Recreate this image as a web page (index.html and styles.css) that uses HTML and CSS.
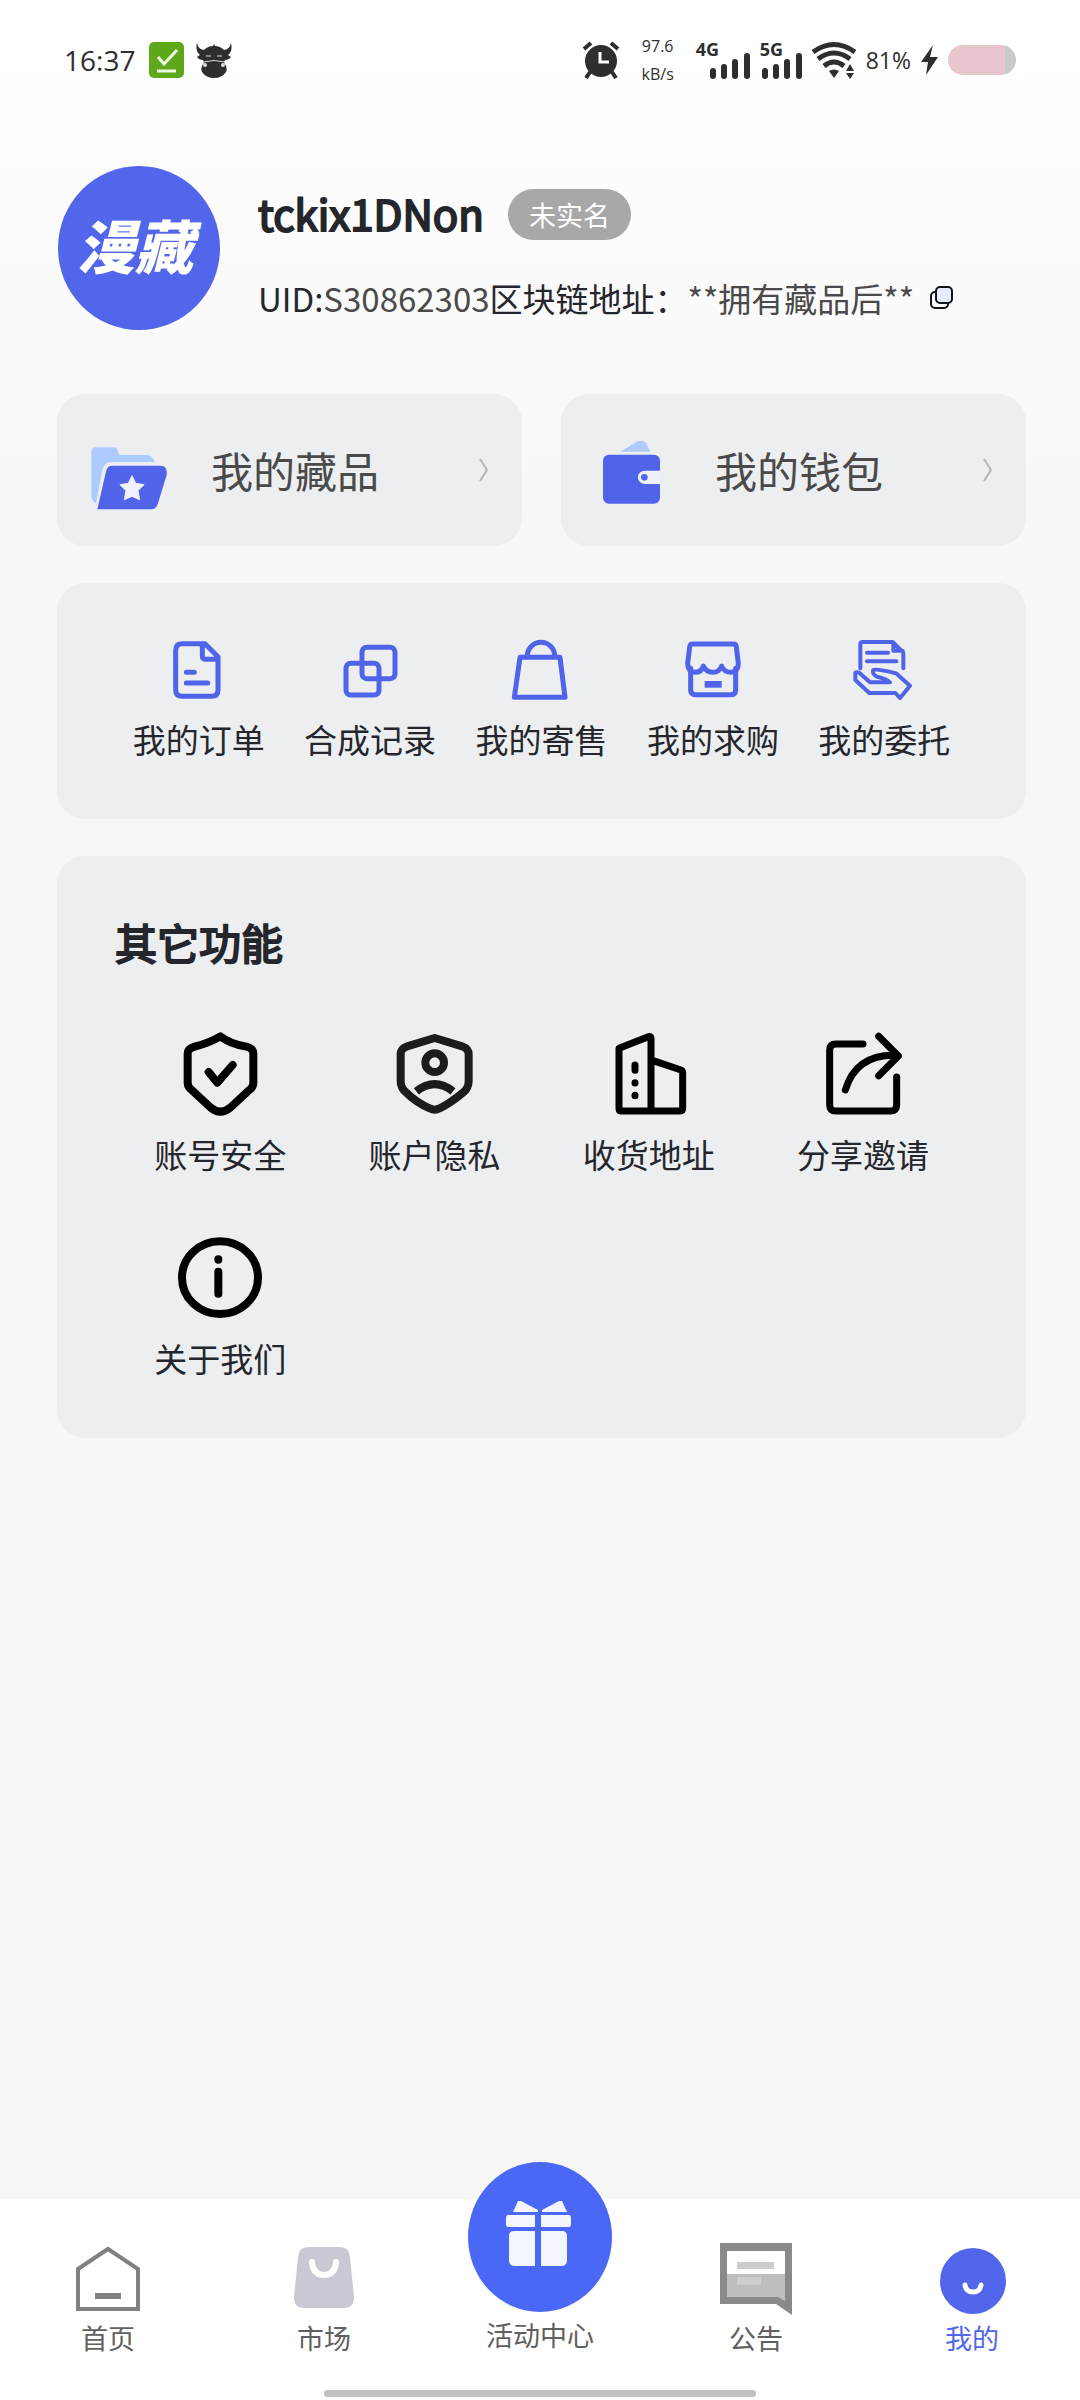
FILE: index.html
```html
<!DOCTYPE html>
<html lang="zh-CN">
<head>
<meta charset="utf-8">
<meta name="viewport" content="width=device-width, initial-scale=1">
<title>我的</title>
<link rel="stylesheet" href="styles.css">
</head>
<body>
<div class="status">
  <div class="status-left">
    <span class="clock">16:37</span>
    <svg width="35" height="36" viewBox="0 0 35 36"><rect width="35" height="36" rx="5" fill="#5fa81c"/><path d="M9 15l6 7 13-14M8 29h19" fill="none" stroke="#eefbe2" stroke-width="3"/></svg>
    <svg width="36" height="36" viewBox="0 0 36 36" fill="#2e2e2e"><path d="M1 1q1 6 7 7 4-4 9-4l1-2 1 2q5 0 9 4 6-1 7-7 2 8-3 12l3 2q-2 3-6 3l-1 3H8l-1-3q-4 0-6-3l3-2Q-1 9 1 1z"/><path d="M8 21q10-3 20 0 4 4 2 9-4 6-12 6T6 30q-2-5 2-9z"/><path d="M7 20q11-3 22 0M10 14h5M21 14h5" stroke="#ddd" stroke-width="1" fill="none"/><circle cx="9" cy="23" r="2" fill="#ddd"/><circle cx="27" cy="23" r="2" fill="#ddd"/></svg>
  </div>
  <div class="status-right">
    <svg width="38" height="38" viewBox="0 0 38 38"><circle cx="19" cy="20" r="16" fill="#2e2e2e"/><path d="M2 8l7-6M36 8l-7-6M8 31l-4 6M30 31l4 6" stroke="#2e2e2e" stroke-width="4" fill="none"/><path d="M18 11v10h9" fill="none" stroke="#fff" stroke-width="3"/></svg>
    <span class="speed"><span>97.6</span><span>kB/s</span></span>
    <span class="signal signal-wide"><span class="net">4G</span><svg width="40" height="26" viewBox="0 0 40 26"><path d="M3 18v5M14 14v9M25 9v14M37 3v20" stroke="#2e2e2e" stroke-width="6" stroke-linecap="round"/></svg></span>
    <span class="signal"><span class="net">5G</span><svg width="40" height="26" viewBox="0 0 40 26"><path d="M3 18v5M14 14v9M25 9v14M37 3v20" stroke="#2e2e2e" stroke-width="6" stroke-linecap="round"/></svg></span>
    <svg width="44" height="38" viewBox="0 0 44 38" fill="none" stroke="#2e2e2e" stroke-width="5"><path d="M1 11q21-15 42 0M6 18q16-12 32 0M12 25q10-8 20 0"/><path d="M17 30q5-3 10 0l-5 7zM34 30l4-7 4 7zM34 32h8l-4 6z" fill="#2e2e2e" stroke="none"/></svg>
    <span class="percent">81%</span>
    <svg width="17" height="30" viewBox="0 0 17 30"><path d="M12 0L0 17h7L5 30 17 12H9z" fill="#2e2e2e"/></svg>
    <span class="battery"></span>
  </div>
</div>

<main class="content">
  <header class="profile">
    <svg class="avatar" viewBox="0 0 163 165" role="img" aria-label="漫藏"><ellipse cx="82" cy="82" rx="81" ry="82" fill="#5266ec"/><text class="logo" x="78" y="103" text-anchor="middle">漫藏</text></svg>
    <div class="who">
      <div class="name-row"><h1 class="name">tckix1DNon</h1><span class="badge">未实名</span></div>
      <div class="uid-row">
        <span>UID:<span class="soft">S30862303</span>区块链地址：<span class="soft">**拥有藏品后**</span></span>
        <button class="copy" type="button" aria-label="复制"><svg width="24" height="24" viewBox="0 0 24 24" stroke="#14151c" stroke-width="2"><rect x="1" y="6" width="17" height="16" rx="4" fill="none"/><rect x="6" y="1" width="16" height="16" rx="4" fill="#e8ebff"/></svg></button>
      </div>
    </div>
  </header>

  <div class="cards">
    <a class="card" href="#">
      <svg class="icon-lg" viewBox="135 144 252 252"><path d="M154 215Q154 202 168 202H222Q230 202 234 212 236 224 242 225H320Q338 226 344 246H215Q193 246 187 270L168 370Q154 362 154 345z" fill="#aecbff"/><path d="M199 270Q203 257 218 257H362Q383 257 380 285L354 370Q348 388 335 388H172z" fill="#5064e9"/><path d="M276 287l11 23 25 4-18 18 5 27-23-10-23 10 5-27-18-18 25-4z" fill="#f0f2ff" stroke="#f0f2ff" stroke-width="3" stroke-linejoin="round"/></svg>
      <span class="card-text">我的藏品</span>
      <svg class="chevron" viewBox="0 0 10 24"><path d="M1 1l7 11-7 11" fill="none" stroke="#b4b6b8" stroke-width="2"/></svg>
    </a>
    <a class="card" href="#">
      <svg class="icon-lg" viewBox="147 144 252 252"><path d="M241 215L293 184Q310 178 319 190L331 215z" fill="#aecbff"/><rect x="189" y="224" width="171" height="147" rx="18" fill="#5064e9"/><path d="M362 272H314a20 20 0 0 0 0 40H362z" fill="#eef0fb"/><circle cx="313" cy="292" r="10" fill="#5064e9"/></svg>
      <span class="card-text">我的钱包</span>
      <svg class="chevron" viewBox="0 0 10 24"><path d="M1 1l7 11-7 11" fill="none" stroke="#b4b6b8" stroke-width="2"/></svg>
    </a>
  </div>

  <section class="panel orders">
    <a class="item" href="#"><svg class="icon-md" viewBox="207 117 186 186"><path d="M318 131H250Q230 131 230 151V270Q230 289 250 289H338Q357 289 357 270V170zM310 131V168Q310 178 320 178H357M262 217H286M262 249H326"/></svg>我的订单</a>
    <a class="item" href="#"><svg class="icon-md" viewBox="719 117 186 186"><rect x="788" y="142" width="99" height="94" rx="14"/><rect x="740" y="190" width="99" height="95" rx="14"/></svg>合成记录</a>
    <a class="item" href="#"><svg class="icon-md" viewBox="1230 117 186 186"><path d="M1260 172H1380L1395 292H1243zM1282 168A41 41 0 0 1 1364 168"/></svg>我的寄售</a>
    <a class="item" href="#"><svg class="icon-md" viewBox="426 117 186 186"><path d="M452 205V270Q452 284 466 284H574Q587 284 587 270V205M458 132H580Q588 132 589 141L595 190Q595 215 573 217 552 217 545 198 538 217 519 217 498 217 490 198 485 217 465 217 443 215 443 190L449 141Q450 132 458 132z"/><rect x="494" y="243" width="51" height="20" fill="#5064e9" stroke="none"/></svg>我的求购</a>
    <a class="item" href="#"><svg class="icon-md thin" viewBox="939 117 186 186"><path d="M961 205V133Q961 126 968 126H1058L1090 158V205M1060 130V152H1088M981 158H1044M981 184H1069M946 218Q955 214 962 222L990 247H1050Q1040 237 1010 230 995 220 1000 210 1010 205 1068 220L1110 257 1080 294 1066 279H988L946 240z"/></svg>我的委托</a>
  </section>

  <section class="panel others">
    <h2 class="panel-title">其它功能</h2>
    <div class="grid">
      <a class="item" href="#"><svg class="icon-lg dark" viewBox="235 393 252 252"><path d="M362 406Q390 428 440 437 461 442 461 458V545Q461 558 450 566L392 620Q362 644 333 620L275 566Q264 557 264 545V458Q264 443 285 437 330 425 362 406zM327 513L353 545 399 492"/></svg>账号安全</a>
      <a class="item" href="#"><svg class="icon-lg dark person" viewBox="877 393 252 252"><path d="M1005 411L1090 437Q1107 443 1107 460V540Q1107 562 1090 575 1050 608 1020 622 1005 630 990 622 950 605 920 575 903 562 903 540V460Q903 443 920 437z"/><circle cx="1005" cy="485" r="28"/><path d="M950 571Q1005 528 1060 571" stroke-linecap="butt"/></svg>账户隐私</a>
      <a class="item" href="#"><svg class="icon-lg dark line" viewBox="198 93 252 252"><path d="M234 142L322 107Q330 105 330 112V330H240Q234 330 234 322zM334 178L420 207Q425 210 425 215V322Q425 330 417 330H330M282 192V208M282 245v1M282 283v1"/></svg>收货地址</a>
      <a class="item" href="#"><svg class="icon-lg dark line" viewBox="840 93 252 252"><path d="M966 129H885Q866 129 866 148V311Q866 330 885 330H1048Q1067 330 1067 311V228M1013 106L1072 165 1013 224M913 267Q945 160 1064 163"/></svg>分享邀请</a>
      <a class="item" href="#"><svg class="icon-lg dark" viewBox="237 1005 252 252"><ellipse cx="363" cy="1130" rx="114" ry="109"/><path d="M358 1075v1M358 1112V1178"/></svg>关于我们</a>
    </div>
  </section>
</main>

<nav class="tabbar">
  <div class="tabs">
    <a class="tab" href="#"><svg class="tab-icon" viewBox="0 0 72 72"><path d="M6 26L36 6 66 26V66H6z" fill="none" stroke="#808080" stroke-width="4"/><path d="M23 50h26v6H23z" fill="#808080"/></svg>首页</a>
    <a class="tab" href="#"><svg class="tab-icon" viewBox="0 0 72 72"><path d="M20 4H52Q61 4 62 14L66 54Q66 65 56 65H16Q6 65 6 54L10 14Q11 4 20 4z" fill="#c9c9d4"/><path d="M24 19Q25 32 36 32T48 19" fill="none" stroke="#fff" stroke-width="6" stroke-linecap="round"/></svg>市场</a>
    <a class="tab" href="#"><svg class="gift" viewBox="0 0 144 150"><ellipse cx="72" cy="75" rx="72" ry="75" fill="#4a68f5"/><path d="M45 50L50 39 53 39 70 48V50zM99 50L94 39 91 39 74 48V50zM40 53H67V65H40Q38 65 38 62V56Q38 53 40 53zM73 53H101Q103 53 103 56V62Q103 65 101 65H73zM46 69H67V104H47Q41 104 41 98V74Q41 69 46 69zM73 69H94Q99 69 99 74V98Q99 104 93 104H73z" fill="#f3f5ff"/></svg>活动中心</a>
    <a class="tab" href="#"><svg class="tab-icon" viewBox="0 0 72 72"><path d="M0 0H72V72L56 61H0z" fill="#8a8a8a"/><path d="M7 8H65V31H7z" fill="#fff"/><path d="M7 31H65V58L58 54H7z" fill="#bebebe"/><path d="M17 19H54V26H17zM17 34H41V42H17z" fill="#cdcdcd"/></svg>公告</a>
    <a class="tab active" href="#"><svg class="tab-icon" viewBox="0 0 72 72"><ellipse cx="37" cy="38" rx="33" ry="33" fill="#5266ec"/><path d="M29 42Q30 49 37 49T45 42" fill="none" stroke="#fff" stroke-width="5" stroke-linecap="round"/></svg>我的</a>
  </div>
  <div class="home-bar"></div>
</nav>
</body>
</html>
```
FILE: styles.css
```css
* { box-sizing: border-box; }

body {
  margin: 0;
  min-height: 100vh;
  display: flex;
  flex-direction: column;
  background: #f7f7f7 linear-gradient(#ffffff, #f7f7f7) 0 0 / 100% 550px no-repeat;
  color: #25262c;
  font-family: "Noto Sans CJK SC", sans-serif;
  font-size: 33px;
  font-weight: 400;
  line-height: 48px;
}

a { color: inherit; text-decoration: none; }
h1, h2 { margin: 0; }
svg { display: block; flex: none; }

.status {
  display: flex;
  justify-content: space-between;
  align-items: center;
  height: 120px;
  padding: 0 64px;
  color: #2e2e2e;
  font-family: "Open Sans", sans-serif;
}
.status-left, .status-right { display: flex; align-items: center; }
.status-left { gap: 12px; }
.clock { width: 73px; font-size: 28px; }
.status-right { gap: 10px; }
.speed {
  display: flex;
  flex-direction: column;
  gap: 12px;
  width: 56px;
  text-align: center;
  font-size: 16px;
  line-height: 16px;
}
.signal { position: relative; width: 42px; height: 38px; display: flex; justify-content: flex-end; align-items: flex-end; }
.signal-wide { width: 54px; }
.net { position: absolute; left: 0; top: 0; font-size: 18px; line-height: 16px; font-weight: 700; }
.percent { font-size: 23px; }
.battery {
  width: 68px;
  height: 30px;
  border-radius: 15px;
  background: linear-gradient(90deg, #e8c6cd 84%, #c9c9c9 84%);
}

.content { padding: 46px 54px 60px 57px; }

.profile { display: flex; gap: 38px; }
.avatar { width: 163px; height: 165px; }
.logo { font-size: 58px; font-weight: 900; font-style: italic; fill: #fff; }
.who { display: flex; flex-direction: column; gap: 34px; padding-top: 23px; }
.name-row { display: flex; align-items: flex-start; gap: 24px; height: 51px; }
.name, .panel-title { font-size: 42px; font-weight: 400; -webkit-text-stroke: 2px currentColor; }
.badge {
  padding: 0 21px;
  border-radius: 26px;
  background: #a8a8a8;
  color: #fff;
  font-size: 27px;
  line-height: 51px;
}
.uid-row { display: flex; align-items: center; gap: 16px; white-space: nowrap; }
.soft { color: #4a4a4a; }
.copy { padding: 0; border: 0; background: none; }

.cards { display: grid; grid-template-columns: 1fr 1fr; gap: 39px; margin: 63px 0 37px; }
.card {
  display: flex;
  align-items: center;
  height: 152px;
  padding: 0 33px 0 28px;
  border-radius: 28px;
  background: #eceeef;
}
.card-text { flex: 1; margin-left: 42px; color: #4a4a4a; font-size: 42px; }
.chevron { width: 10px; height: 24px; }

.panel { padding: 56px; border-radius: 28px; background: #eceeef; }
.orders { display: grid; grid-template-columns: repeat(5, 1fr); margin-bottom: 37px; }
.item { display: flex; flex-direction: column; align-items: center; gap: 14px; }
.icon-md { width: 62px; height: 62px; fill: none; stroke: #5064e9; stroke-width: 15; stroke-linecap: round; stroke-linejoin: round; }
.thin { stroke-width: 12; }
.icon-lg { width: 84px; height: 84px; }
.dark { fill: none; stroke: #000; stroke-width: 24; stroke-linecap: round; stroke-linejoin: round; }
.person { stroke: #1c1c1e; }
.line { stroke-width: 21; }

.panel-title { padding-left: 2px; line-height: 60px; }
.grid { display: grid; grid-template-columns: repeat(4, 1fr); row-gap: 58px; margin-top: 60px; }

.tabbar { margin-top: auto; padding: 44px 0 3px; background: #fff; }
.tabs { display: grid; grid-template-columns: repeat(5, 1fr); }
.tab {
  display: flex;
  flex-direction: column;
  align-items: center;
  gap: 5px;
  color: #606060;
  font-size: 27px;
  line-height: 36px;
}
.tab-icon { width: 72px; height: 72px; }
.gift { width: 144px; height: 150px; margin-top: -81px; }
.active { color: #5266ec; }
.home-bar { width: 40%; height: 7px; margin: 34px auto 0; border-radius: 4px; background: #c2c2c2; }
```
